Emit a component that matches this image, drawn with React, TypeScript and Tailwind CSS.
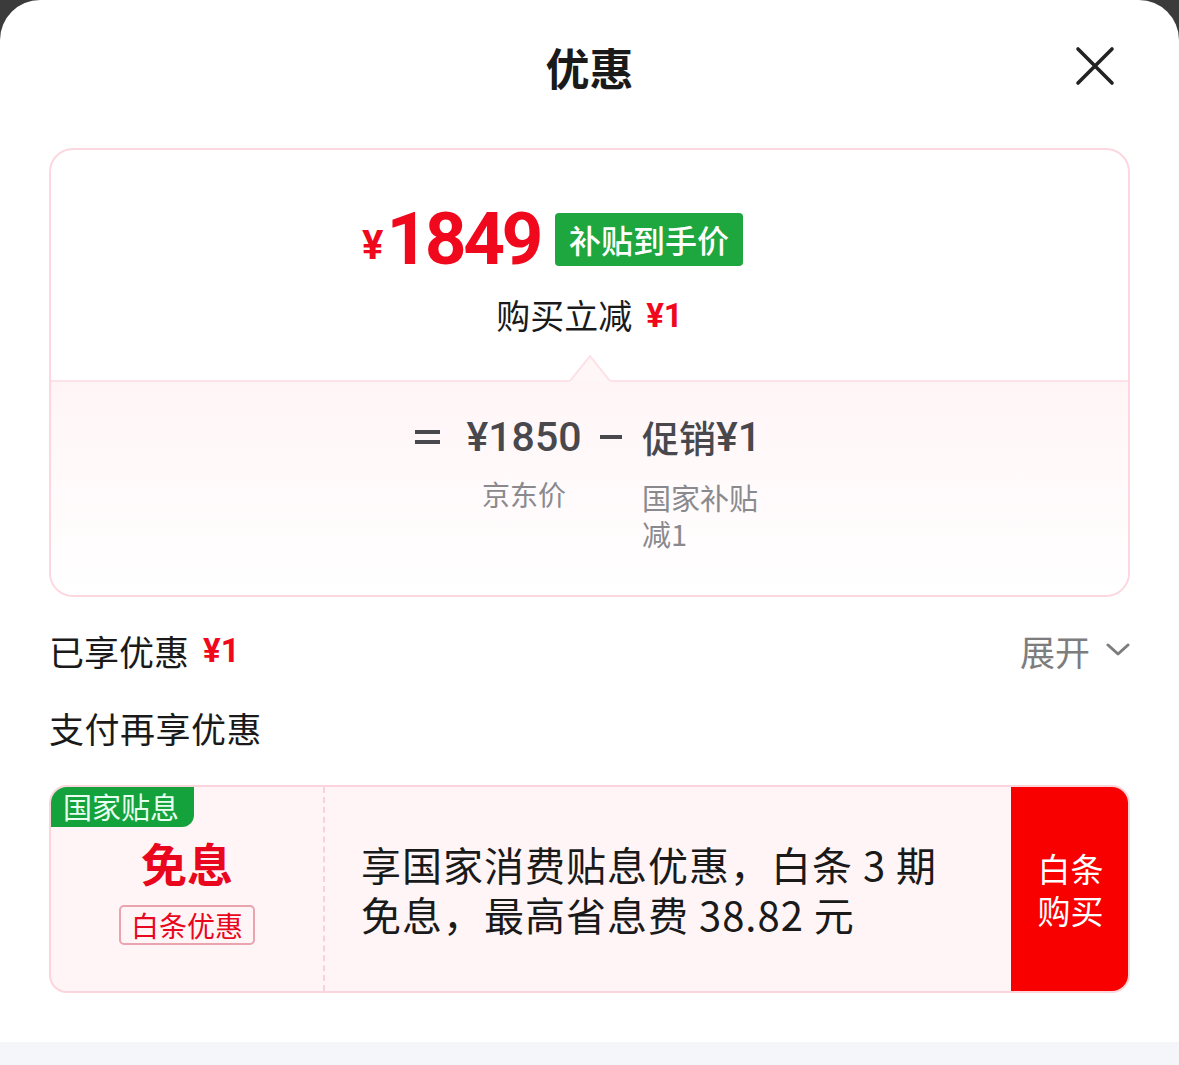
import React from "react";

const cjk = { fontFamily: '"Noto Sans CJK SC", "Noto Sans", sans-serif' };
const num = { fontFamily: 'Roboto, "Noto Sans CJK SC", sans-serif' };

export default function App() {
  return (
    <div className="w-[1179px] h-[1065px] bg-[#3b3b3b] overflow-hidden" style={cjk}>
      <div className="h-full bg-white rounded-t-[40px] flex flex-col">
        {/* header */}
        <div className="h-[134px] relative flex items-center justify-center">
          <span className="text-[44px] font-bold text-[#1a1a1a] leading-none">优惠</span>
          <svg className="absolute left-[1074px] top-[45px]" width="42" height="42" viewBox="0 0 42 42">
            <path d="M4 4 L38 38 M38 4 L4 38" stroke="#222" strokeWidth="3.6" strokeLinecap="round" />
          </svg>
        </div>

        {/* price card */}
        <div className="mx-[49px] mt-[14px] h-[449px] border-2 border-[#fcd7df] rounded-[24px] overflow-hidden flex flex-col">
          <div className="h-[230px] relative flex flex-col">
            <div className="mt-[58px] h-[62px] flex items-center pl-[311px]">
              <span className="text-[40px] font-bold text-[#f0081c] leading-none mt-[14px]" style={num}>¥</span>
              <span className="ml-[3px] text-[73px] font-bold text-[#f0081c] leading-none tracking-[-3.5px]" style={num}>1849</span>
              <span className="ml-[15px] h-[53px] w-[188px] rounded-[4px] bg-[#1ea63f] text-white text-[32px] font-medium flex items-center justify-center leading-none">补贴到手价</span>
            </div>
            <div className="mt-[25px] h-[40px] flex items-center justify-center">
              <span className="text-[34px] text-[#1a1a1a] leading-none">购买立减</span>
              <span className="ml-[14px] text-[33px] font-bold text-[#f0081c] leading-none" style={num}>¥1</span>
            </div>
            <svg className="absolute left-[518px] bottom-[-2px]" width="42" height="28" viewBox="0 0 42 28">
              <path d="M0 28 L21 2 L42 28 Z" fill="#fff6f8" />
              <path d="M1 27 L21 2 L41 27" fill="none" stroke="#fde0e6" strokeWidth="2" />
            </svg>
          </div>
          <div className="border-t-2 border-[#fde3e8] flex-1 bg-gradient-to-b from-[#fff5f7] to-[#ffffff]">
            <div className="pt-[35px] pl-[364px] flex items-start text-[#48484d]">
              <span className="w-[26px] h-[40px] flex flex-col justify-center gap-[6px]">
                <span className="block w-[25px] h-[4px] bg-[#48484d]" />
                <span className="block w-[25px] h-[4px] bg-[#48484d]" />
              </span>
              <div className="ml-[25px] w-[116px] flex flex-col items-center">
                <span className="h-[40px] flex items-center text-[41px] font-medium leading-none" style={num}>¥1850</span>
                <span className="mt-[19px] text-[28px] leading-[36px] text-[#8a8a8e]">京东价</span>
              </div>
              <span className="ml-[18px] h-[40px] flex items-center">
                <span className="block w-[22px] h-[4px] bg-[#48484d]" />
              </span>
              <div className="ml-[20px] w-[124px] flex flex-col items-start">
                <span className="h-[40px] flex items-center text-[37px] font-medium leading-none whitespace-nowrap">促销<span style={num} className="text-[41px]">¥1</span></span>
                <span className="mt-[22px] text-[29px] leading-[36px] text-[#8a8a8e]">国家补贴减1</span>
              </div>
            </div>
          </div>
        </div>

        {/* enjoyed */}
        <div className="mx-[49px] mt-[31px] h-[44px] flex items-center justify-between">
          <div className="flex items-center">
            <span className="text-[35px] text-[#1a1a1a] leading-none">已享优惠</span>
            <span className="ml-[14px] text-[33px] font-bold text-[#f0081c] leading-none" style={num}>¥1</span>
          </div>
          <div className="flex items-center">
            <span className="text-[35px] text-[#7d7d7d] leading-none">展开</span>
            <svg className="ml-[16px]" width="24" height="16" viewBox="0 0 24 16">
              <path d="M2 3 L12 12 L22 3" fill="none" stroke="#7d7d7d" strokeWidth="3" strokeLinecap="round" strokeLinejoin="round" />
            </svg>
          </div>
        </div>

        <div className="mx-[49px] mt-[33px] h-[44px] flex items-center">
          <span className="text-[35px] tracking-[0.5px] text-[#1a1a1a] leading-none">支付再享优惠</span>
        </div>

        {/* payment card */}
        <div className="mx-[49px] mt-[36px] h-[208px] border-2 border-[#fcd5dc] rounded-[18px] bg-[#fff5f6] flex relative overflow-hidden">
          <div className="absolute left-[-3px] top-[-2px] h-[42px] w-[146px] bg-[#13a23b] rounded-tl-[18px] rounded-br-[12px] flex items-center justify-center">
            <span className="text-[29px] text-[#e9fff0] leading-none">国家贴息</span>
          </div>
          <div className="w-[274px] border-r-2 border-dashed border-[#f7d3d9] flex flex-col items-center pt-[52px]">
            <span className="text-[46px] font-bold text-[#e8071d] leading-none">免息</span>
            <span className="mt-[20px] h-[40px] px-[10px] border-2 border-[#eaa4ad] rounded-[5px] flex items-center text-[28px] text-[#e8071d] leading-none">白条优惠</span>
          </div>
          <div className="flex-1 flex items-center pl-[36px]">
            <div className="text-[40px] tracking-[1px] text-[#1a1a1a] flex flex-col gap-[4px]">
              <span className="h-[46px] leading-[46px] whitespace-nowrap">享国家消费贴息优惠，白条 3 期</span>
              <span className="h-[46px] leading-[46px] whitespace-nowrap">免息，最高省息费 38.82 元</span>
            </div>
          </div>
          <div className="w-[119px] -my-[2px] -mr-[2px] bg-[#f80000] flex flex-col items-center justify-center text-[33px] text-white">
            <span className="h-[42px] leading-[42px]">白条</span>
            <span className="h-[42px] leading-[42px]">购买</span>
          </div>
        </div>

        <div className="mt-auto h-[23px] bg-[#f5f6fa]" />
      </div>
    </div>
  );
}
